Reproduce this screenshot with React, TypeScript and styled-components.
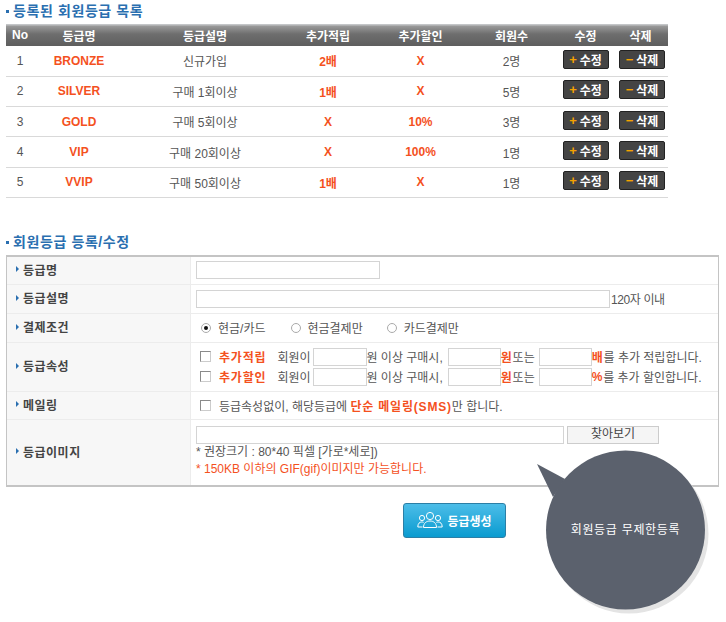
import React from "react";
import styled, { createGlobalStyle } from "styled-components";

const GlobalStyle = createGlobalStyle`
  html, body { margin: 0; padding: 0; background: #fff; }
  body {
    font-family: "Liberation Sans", "Noto Sans CJK KR", sans-serif;
    font-size: 12px;
    color: #555;
  }
  * { box-sizing: border-box; }
`;

const Page = styled.div`
  position: relative;
  width: 726px;
  height: 622px;
  padding: 0 6px;
  overflow: hidden;
`;

const SectionTitle = styled.h2<{ $top: number }>`
  margin: ${(p) => p.$top}px 0 0 0;
  height: 20px;
  display: flex;
  align-items: center;
  font-size: 14px;
  line-height: 20px;
  font-weight: 700;
  letter-spacing: 0.6px;
  color: #2a6fb0;
  &::before {
    content: "";
    width: 3px;
    height: 3px;
    margin-right: 4px;
    margin-top: 1px;
    background: #2a6fb0;
  }
`;

const GradeTable = styled.table`
  width: 662px;
  margin-top: 3px;
  border-collapse: collapse;
  table-layout: fixed;
`;

const HeadCell = styled.th`
  height: 22px;
  padding: 0;
  font-size: 12px;
  font-weight: 700;
  color: #fff;
  text-align: center;
  background: linear-gradient(#c4c6c8 0, #c4c6c8 1px, #9a9a9a 2px, #6e6e6e 10px, #5e5e5e 100%);
  &:last-child { padding-right: 6px; }
`;

const BodyRow = styled.tr`
  border-bottom: 1px solid #d9d9d9;
`;

const Cell = styled.td<{ $accent?: boolean }>`
  height: 30.3px;
  padding: 0;
  text-align: center;
  font-size: 12px;
  font-weight: ${(p) => (p.$accent ? 700 : 400)};
  color: ${(p) => (p.$accent ? "#f4511e" : "#555")};
  &:last-child { padding-right: 6px; }
`;

const ActionButton = styled.span`
  display: inline-flex;
  align-items: center;
  justify-content: center;
  gap: 3px;
  width: 46px;
  height: 19px;
  margin-bottom: 3px;
  vertical-align: middle;
  background: #444;
  border: 1px solid #222;
  border-radius: 2px;
  color: #fff;
  font-size: 12px;
  font-weight: 700;
`;

const ActionMark = styled.b`
  color: #f5a300;
  font-size: 13px;
`;

const FormBox = styled.div`
  width: 713px;
  margin-top: 3px;
  border: 1px solid #c4c4c4;
  border-top-width: 2px;
  border-bottom-width: 2px;
`;

const FormRow = styled.div<{ $height: number }>`
  display: flex;
  height: ${(p) => p.$height}px;
  border-bottom: 1px solid #ececec;
  &:last-child { border-bottom: 0; }
`;

const FormLabel = styled.div`
  flex: 0 0 184px;
  display: flex;
  align-items: center;
  padding: 0 0 2px 9px;
  background: #f7f7f7;
  border-right: 1px solid #ececec;
  font-weight: 700;
  letter-spacing: 0.5px;
  color: #444;
  &::before {
    content: "";
    margin-right: 4px;
    border-left: 3px solid #2a6fb0;
    border-top: 3px solid transparent;
    border-bottom: 3px solid transparent;
  }
`;

const FormValue = styled.div`
  flex: 1;
  display: flex;
  flex-direction: column;
  justify-content: center;
  padding-left: 5px;
  min-width: 0;
`;

const Line = styled.div<{ $height?: number }>`
  display: flex;
  align-items: center;
  height: ${(p) => p.$height ?? 18}px;
  white-space: pre;
`;

const TextField = styled.span<{ $width: number }>`
  display: inline-block;
  flex: none;
  width: ${(p) => p.$width}px;
  height: 18px;
  background: #fff;
  border: 1px solid #d4d4d4;
`;

const Hint = styled.span`
  margin-left: 1px;
  letter-spacing: -0.4px;
`;

const Check = styled.span`
  flex: none;
  width: 11px;
  height: 11px;
  margin: 0 8px 0 4px;
  background: #fff;
  border: 1px solid #8a8a8a;
  border-right-color: #ccc;
  border-bottom-color: #ccc;
`;

const Radio = styled.span<{ $on?: boolean; $left: number }>`
  flex: none;
  display: flex;
  align-items: center;
  justify-content: center;
  width: 10px;
  height: 10px;
  margin: 0 7px 0 ${(p) => p.$left}px;
  border-radius: 50%;
  border: 1px solid #aaa;
  background: #fff;
  &::after {
    content: "";
    width: 4px;
    height: 4px;
    border-radius: 50%;
    background: ${(p) => (p.$on ? "#111" : "transparent")};
  }
`;

const Strong = styled.b<{ $gap?: number }>`
  color: #f4511e;
  letter-spacing: 0.8px;
  margin-right: ${(p) => p.$gap ?? 0}px;
`;

const Gap = styled.span<{ $width: number }>`
  flex: none;
  width: ${(p) => p.$width}px;
`;

const Note = styled.div<{ $warn?: boolean }>`
  height: 17px;
  line-height: 17px;
  color: ${(p) => (p.$warn ? "#f4511e" : "#555")};
`;

const BrowseButton = styled.span`
  flex: none;
  display: flex;
  justify-content: center;
  width: 92px;
  height: 18px;
  margin-left: 3px;
  line-height: 14px;
  background: #f5f5f5;
  border: 1px solid #ccc;
  color: #444;
`;

const SubmitRow = styled.div`
  display: flex;
  padding-left: 397px;
  margin-top: 16px;
`;

const SubmitButton = styled.span`
  display: inline-flex;
  align-items: center;
  justify-content: center;
  gap: 4px;
  width: 103px;
  height: 35px;
  border-radius: 3px;
  border: 1px solid #2b7fa6;
  background: linear-gradient(#4cbde8, #0a9bd0);
  color: #fff;
  font-weight: 700;
`;

const Bubble = styled.div`
  position: absolute;
  left: 530px;
  top: 440px;
  width: 190px;
  height: 180px;
`;

const BubbleText = styled.div`
  position: absolute;
  left: 0;
  top: 82px;
  width: 191px;
  text-align: center;
  color: #fff;
  line-height: 16px;
  letter-spacing: 0.7px;
`;

const grades = [
  { no: 1, name: "BRONZE", desc: "신규가입", point: "2배", sale: "X", count: "2명" },
  { no: 2, name: "SILVER", desc: "구매 1회이상", point: "1배", sale: "X", count: "5명" },
  { no: 3, name: "GOLD", desc: "구매 5회이상", point: "X", sale: "10%", count: "3명" },
  { no: 4, name: "VIP", desc: "구매 20회이상", point: "X", sale: "100%", count: "1명" },
  { no: 5, name: "VVIP", desc: "구매 50회이상", point: "1배", sale: "X", count: "1명" },
];

function UsersIcon() {
  return (
    <svg width="26" height="18" viewBox="0 0 26 18" fill="none" stroke="#fff" strokeWidth="1">
      <circle cx="13" cy="5" r="3.6" />
      <path d="M6.5 16.5c0-4.5 3-6.5 6.5-6.5s6.5 2 6.5 6.5z" />
      <circle cx="5" cy="7" r="2.6" />
      <path d="M5.5 16H.8c0-3.6 1.8-5 4-5 .7 0 1.3.1 1.8.4" />
      <circle cx="21" cy="7" r="2.6" />
      <path d="M20.5 16h4.7c0-3.6-1.8-5-4-5-.7 0-1.3.1-1.8.4" />
    </svg>
  );
}

function AttributeLine({ label, unit, tail }: { label: string; unit: string; tail: string }) {
  return (
    <Line $height={20}>
      <Check />
      <Strong $gap={11}>{label}</Strong>
      회원이
      <Gap $width={2} />
      <TextField $width={54} />
      원 이상 구매시,
      <Gap $width={5} />
      <TextField $width={53} />
      <Strong>원</Strong>
      또는
      <Gap $width={4} />
      <TextField $width={53} />
      <Strong>{unit}</Strong>
      {tail}
    </Line>
  );
}

export default function App() {
  return (
    <Page>
      <GlobalStyle />
      <SectionTitle $top={1}>등록된 회원등급 목록</SectionTitle>
      <GradeTable>
        <colgroup>
          <col width="28" />
          <col width="90" />
          <col width="162" />
          <col width="84" />
          <col width="101" />
          <col width="81" />
          <col width="67" />
          <col width="49" />
        </colgroup>
        <thead>
          <tr>
            {["No", "등급명", "등급설명", "추가적립", "추가할인", "회원수", "수정", "삭제"].map((h) => (
              <HeadCell key={h}>{h}</HeadCell>
            ))}
          </tr>
        </thead>
        <tbody>
          {grades.map((g) => (
            <BodyRow key={g.no}>
              <Cell>{g.no}</Cell>
              <Cell $accent>{g.name}</Cell>
              <Cell>{g.desc}</Cell>
              <Cell $accent>{g.point}</Cell>
              <Cell $accent>{g.sale}</Cell>
              <Cell>{g.count}</Cell>
              <Cell>
                <ActionButton><ActionMark>+</ActionMark>수정</ActionButton>
              </Cell>
              <Cell>
                <ActionButton><ActionMark>−</ActionMark>삭제</ActionButton>
              </Cell>
            </BodyRow>
          ))}
        </tbody>
      </GradeTable>

      <SectionTitle $top={34}>회원등급 등록/수정</SectionTitle>
      <FormBox>
        <FormRow $height={28}>
          <FormLabel>등급명</FormLabel>
          <FormValue>
            <Line><TextField $width={184} /></Line>
          </FormValue>
        </FormRow>
        <FormRow $height={29}>
          <FormLabel>등급설명</FormLabel>
          <FormValue>
            <Line><TextField $width={414} /><Hint>120자 이내</Hint></Line>
          </FormValue>
        </FormRow>
        <FormRow $height={29}>
          <FormLabel>결제조건</FormLabel>
          <FormValue>
            <Line>
              <Radio $on $left={5} />현금/카드
              <Radio $left={25} />현금결제만
              <Radio $left={24} />카드결제만
            </Line>
          </FormValue>
        </FormRow>
        <FormRow $height={49}>
          <FormLabel>등급속성</FormLabel>
          <FormValue>
            <AttributeLine label="추가적립" unit="배" tail="를 추가 적립합니다." />
            <AttributeLine label="추가할인" unit="%" tail="를 추가 할인합니다." />
          </FormValue>
        </FormRow>
        <FormRow $height={28}>
          <FormLabel>메일링</FormLabel>
          <FormValue>
            <Line>
              <Check />등급속성없이, 해당등급에 <Strong>단순 메일링(SMS)</Strong>만 합니다.
            </Line>
          </FormValue>
        </FormRow>
        <FormRow $height={65}>
          <FormLabel>등급이미지</FormLabel>
          <FormValue>
            <Line>
              <TextField $width={368} />
              <BrowseButton>찾아보기</BrowseButton>
            </Line>
            <Note>* 권장크기 : 80*40 픽셀 [가로*세로])</Note>
            <Note $warn>* 150KB 이하의 GIF(gif)이미지만 가능합니다.</Note>
          </FormValue>
        </FormRow>
      </FormBox>
      <SubmitRow>
        <SubmitButton><UsersIcon />등급생성</SubmitButton>
      </SubmitRow>

      <Bubble>
        <svg width="190" height="180" viewBox="0 0 190 180">
          <circle cx="99" cy="94" r="79.5" fill="#e4e4e4" />
          <path d="M7 24 L35 39 L23 57 Z" fill="#5b616d" />
          <circle cx="95.5" cy="90" r="79.5" fill="#5b616d" />
        </svg>
        <BubbleText>회원등급 무제한등록</BubbleText>
      </Bubble>
    </Page>
  );
}
